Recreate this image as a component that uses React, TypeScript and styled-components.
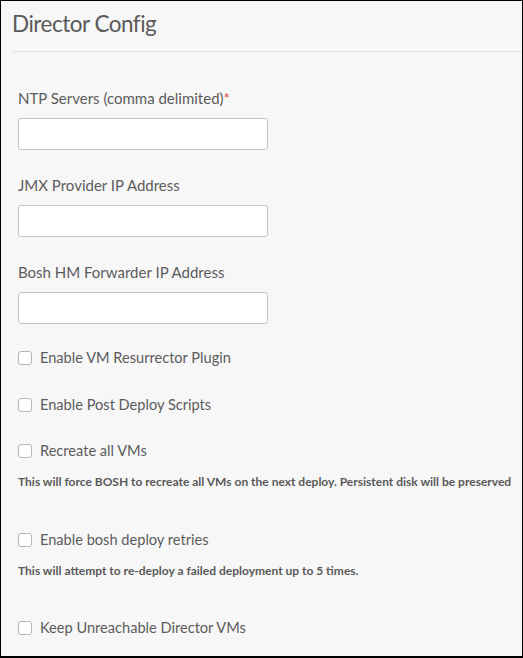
import React from "react";
import styled, { createGlobalStyle } from "styled-components";

const Global = createGlobalStyle`
  html, body { margin: 0; padding: 0; background: #ffffff; }
  body { font-family: Lato, "Open Sans", sans-serif; }
  * { box-sizing: border-box; }
`;

const Frame = styled.div`
  width: 523px;
  height: 658px;
  background: #f7f7f7;
  border: 1px solid #000;
  border-bottom-width: 2px;
  overflow: hidden;
`;

const Header = styled.div`
  height: 51px;
  margin-left: 11px;
  border-bottom: 1px solid #e2e2e2;
  display: flex;
  align-items: flex-start;
`;

const Title = styled.h1`
  margin: 9px 0 0 0;
  font-family: Lato, sans-serif;
  font-weight: 400;
  font-size: 22.5px;
  letter-spacing: -0.5px;
  line-height: 28px;
  color: #5a5a5a;
`;

const Form = styled.div`
  padding: 36px 0 0 17px;
  display: flex;
  flex-direction: column;
`;

const Label = styled.label`
  font-size: 15px;
  line-height: 20px;
  color: #5c5c5c;
  margin-bottom: 10px;
`;

const Req = styled.span`
  color: #e0443c;
`;

const Input = styled.input<{ $mb: number }>`
  width: 250px;
  height: 32px;
  background: #fff;
  border: 1px solid #c4c4c4;
  border-radius: 3px;
  margin-bottom: ${(p) => p.$mb}px;
`;

const CheckRow = styled.label<{ $mb: number }>`
  display: flex;
  align-items: center;
  gap: 8px;
  font-size: 14.6px;
  line-height: 20px;
  color: #5c5c5c;
  margin-bottom: ${(p) => p.$mb}px;
`;

const Box = styled.span`
  width: 14px;
  height: 14px;
  border: 1px solid #b5b5b5;
  border-radius: 3px;
  background: #fff;
  flex: none;
`;

const Help = styled.div<{ $mb: number }>`
  font-size: 12px;
  line-height: 18px;
  font-weight: 700;
  color: #5a5a5a;
  white-space: nowrap;
  margin-bottom: ${(p) => p.$mb}px;
`;

export default function App() {
  return (
    <>
      <Global />
      <Frame>
        <Header>
          <Title>Director Config</Title>
        </Header>
        <Form>
          <Label>
            NTP Servers (comma delimited)<Req>*</Req>
          </Label>
          <Input $mb={25} />
          <Label>JMX Provider IP Address</Label>
          <Input $mb={25} />
          <Label>Bosh HM Forwarder IP Address</Label>
          <Input $mb={24} />
          <CheckRow $mb={27}>
            <Box />
            Enable VM Resurrector Plugin
          </CheckRow>
          <CheckRow $mb={26}>
            <Box />
            Enable Post Deploy Scripts
          </CheckRow>
          <CheckRow $mb={12}>
            <Box />
            Recreate all VMs
          </CheckRow>
          <Help $mb={39}>
            This will force BOSH to recreate all VMs on the next deploy. Persistent disk will be preserved
          </Help>
          <CheckRow $mb={12}>
            <Box />
            Enable bosh deploy retries
          </CheckRow>
          <Help $mb={38}>This will attempt to re-deploy a failed deployment up to 5 times.</Help>
          <CheckRow $mb={0}>
            <Box />
            Keep Unreachable Director VMs
          </CheckRow>
        </Form>
      </Frame>
    </>
  );
}
